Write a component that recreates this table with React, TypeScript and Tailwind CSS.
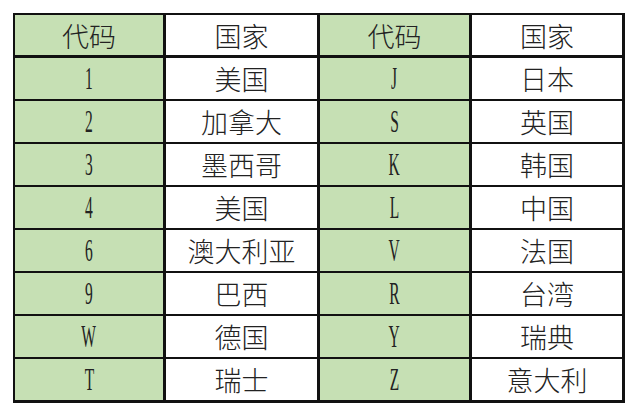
const rows: [string, string, string, string][] = [
  ['1', '美国', 'J', '日本'],
  ['2', '加拿大', 'S', '英国'],
  ['3', '墨西哥', 'K', '韩国'],
  ['4', '美国', 'L', '中国'],
  ['6', '澳大利亚', 'V', '法国'],
  ['9', '巴西', 'R', '台湾'],
  ['W', '德国', 'Y', '瑞典'],
  ['T', '瑞士', 'Z', '意大利'],
];

const cjk = "font-['Noto_Sans_CJK_SC',sans-serif] font-light";

function Code({ children }: { children: string }) {
  return (
    <div className="flex h-[41px] items-center justify-center bg-[#c6e0b4]">
      <span className="inline-block scale-x-[0.5] font-['Liberation_Serif',serif] text-[31px] leading-none text-[#222]">
        {children}
      </span>
    </div>
  );
}

function Country({ children }: { children: string }) {
  return (
    <div className={`flex h-[41px] items-center justify-center bg-white text-[27px] leading-none text-[#222] ${cjk}`}>
      {children}
    </div>
  );
}

export default function App() {
  return (
    <div className="h-[417px] w-[640px] bg-white pl-[13px] pt-[13px]">
      <div className="inline-grid grid-cols-[148px_151px_149px_150px] gap-x-[3px] gap-y-[2px] bg-[#111] p-[2px] pb-[3px] pr-[3px]">
        <div className={`mb-[1px] flex h-[40px] items-center justify-center bg-[#c6e0b4] text-[27px] leading-none text-[#222] ${cjk}`}>代码</div>
        <div className={`mb-[1px] flex h-[40px] items-center justify-center bg-white text-[27px] leading-none text-[#222] ${cjk}`}>国家</div>
        <div className={`mb-[1px] flex h-[40px] items-center justify-center bg-[#c6e0b4] text-[27px] leading-none text-[#222] ${cjk}`}>代码</div>
        <div className={`mb-[1px] flex h-[40px] items-center justify-center bg-white text-[27px] leading-none text-[#222] ${cjk}`}>国家</div>
        {rows.map((r, i) => (
          <>
            <Code key={`a${i}`}>{r[0]}</Code>
            <Country key={`b${i}`}>{r[1]}</Country>
            <Code key={`c${i}`}>{r[2]}</Code>
            <Country key={`d${i}`}>{r[3]}</Country>
          </>
        ))}
      </div>
    </div>
  );
}
